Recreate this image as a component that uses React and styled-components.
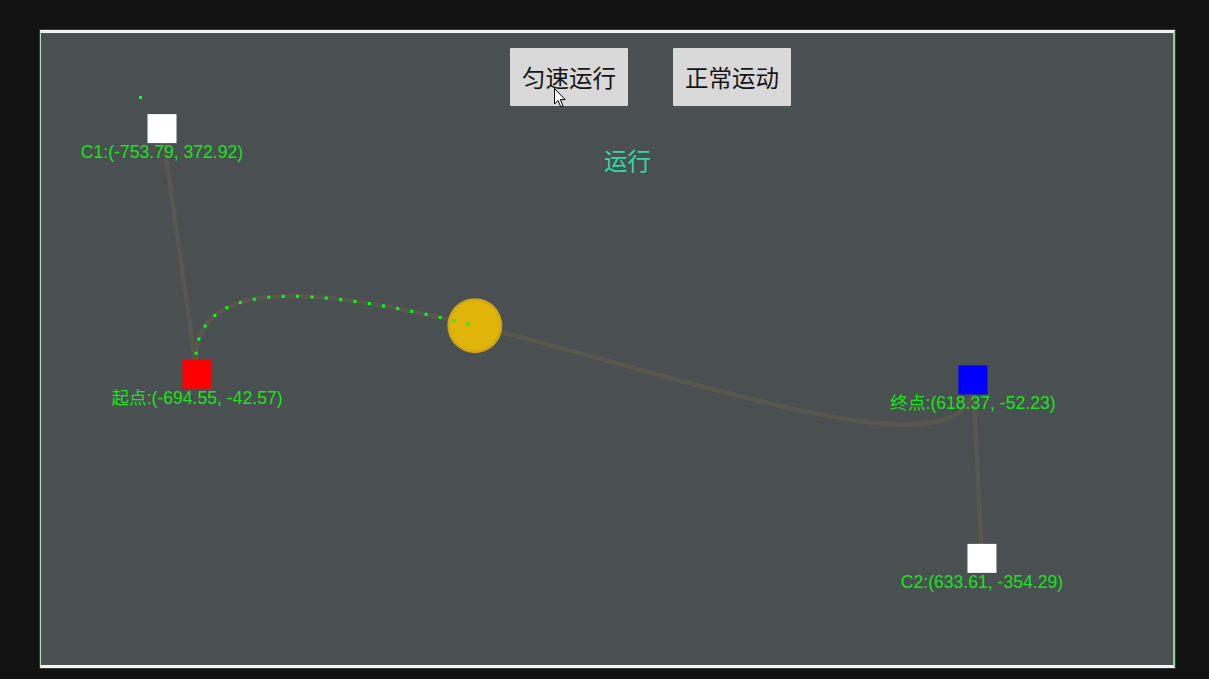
import React from "react";
import styled, { createGlobalStyle } from "styled-components";

const Global = createGlobalStyle`
  html, body { margin: 0; padding: 0; background: #121212; }
  body { width: 1209px; height: 679px; overflow: hidden; font-family: "Liberation Sans", "Noto Sans CJK SC", sans-serif; }
`;

const ORIGIN_X = 41;
const ORIGIN_Y = 33;
const SCALE = 0.591;
const CX = 607.5;
const CY = 349;
const toScreen = ([wx, wy]) => [CX + wx * SCALE, CY - wy * SCALE];

const Stage = styled.div`
  position: relative;
  margin: 30px 0 0 40px;
  width: 1132px;
  height: 632px;
  background: #4a4f52;
  border-top: 3px solid #f4f4f4;
  border-bottom: 3px solid #f4f4f4;
  border-left: 1px solid #b8e0b8;
  border-right: 2px solid #92d092;
  box-shadow: 0 0 0 1px #383838;
  display: flex;
  flex-direction: column;
`;

const Canvas = styled.svg`
  position: absolute;
  left: 0;
  top: 0;
  width: 1132px;
  height: 632px;
`;

const Toolbar = styled.div`
  position: relative;
  display: flex;
  gap: 45px;
  margin-top: 15px;
  padding-left: 469px;
`;

const Button = styled.button`
  width: 118px;
  height: 58px;
  border: none;
  border-radius: 1px;
  background: #d9d9d9;
  color: #161616;
  font-family: "Noto Sans CJK SC", sans-serif;
  font-size: 23.5px;
  padding: 0;
  display: flex;
  align-items: center;
  justify-content: center;
`;

const Status = styled.div`
  position: relative;
  margin-top: 41px;
  padding-left: 563px;
  color: #2ed9a2;
  font-family: "Noto Sans CJK SC", sans-serif;
  font-size: 23.5px;
  line-height: 26px;
`;

const Label = styled.div`
  position: absolute;
  transform: translateX(-50%);
  white-space: nowrap;
  color: #16e516;
  font-family: "Liberation Sans", "Noto Sans CJK SC", sans-serif;
  font-size: 17.6px;
  line-height: 20px;
`;

const Cursor = styled.svg`
  position: absolute;
  width: 13px;
  height: 20px;
`;

const points = {
  c1: { w: [-753.79, 372.92], fill: "#ffffff", label: "C1:(-753.79, 372.92)" },
  start: { w: [-694.55, -42.57], fill: "#ff0000", label: "起点:(-694.55, -42.57)" },
  end: { w: [618.37, -52.23], fill: "#0000ff", label: "终点:(618.37, -52.23)" },
  c2: { w: [633.61, -354.29], fill: "#ffffff", label: "C2:(633.61, -354.29)" },
};

const P0 = toScreen(points.start.w);
const P1 = toScreen(points.c1.w);
const P2 = toScreen(points.c2.w);
const P3 = toScreen(points.end.w);

const bez = (t) => {
  const a = (1 - t) ** 3, b = 3 * (1 - t) ** 2 * t, c = 3 * (1 - t) * t * t, d = t ** 3;
  return [a * P0[0] + b * P1[0] + c * P2[0] + d * P3[0], a * P0[1] + b * P1[1] + c * P2[1] + d * P3[1]];
};

const BALL_T = 0.415;
const ball = bez(BALL_T);

const trail = (() => {
  const samples = [];
  let len = 0;
  let prev = bez(0);
  const N = 2000;
  for (let i = 0; i <= N; i++) {
    const t = (i / N) * BALL_T;
    const p = bez(t);
    len += Math.hypot(p[0] - prev[0], p[1] - prev[1]);
    samples.push({ p, len });
    prev = p;
  }
  const first = 21;
  const last = len - 7;
  const count = 22;
  const step = (last - first) / (count - 1);
  const dots = [];
  let j = 0;
  for (let k = 0; k < count; k++) {
    const target = first + k * step;
    while (j < samples.length - 1 && samples[j].len < target) j++;
    dots.push(samples[j].p);
  }
  return dots;
})();

const SQ = 29;

export default function App() {
  const curve = `M${P0[0]} ${P0[1]} C${P1[0]} ${P1[1]} ${P2[0]} ${P2[1]} ${P3[0]} ${P3[1]}`;
  return (
    <>
      <Global />
      <Stage>
        <Canvas viewBox={`${ORIGIN_X} ${ORIGIN_Y} 1132 632`}>
          <defs>
            <radialGradient id="ballG" cx="50%" cy="50%" r="50%">
              <stop offset="86%" stopColor="#e0b409" />
              <stop offset="100%" stopColor="#c6a01a" />
            </radialGradient>
          </defs>
          <g stroke="#58574e" strokeWidth="4.5" fill="none" strokeLinecap="round">
            <line x1={P1[0]} y1={P1[1]} x2={P0[0]} y2={P0[1]} />
            <line x1={P3[0]} y1={P3[1]} x2={P2[0]} y2={P2[1]} />
            <path d={curve} />
          </g>
          <circle cx={ball[0]} cy={ball[1]} r="27.5" fill="url(#ballG)" />
          <rect x={139} y={96} width={3} height={3} fill="#00ff1a" />
          {trail.map(([x, y], i) => (
            <rect key={i} x={x - 1.5} y={y - 1.5} width={3} height={3} fill="#00ff1a" />
          ))}
          {Object.entries(points).map(([k, pt]) => {
            const [x, y] = toScreen(pt.w);
            return <rect key={k} x={x - SQ / 2} y={y - SQ / 2} width={SQ} height={SQ} fill={pt.fill} />;
          })}
        </Canvas>
        <Toolbar>
          <Button>匀速运行</Button>
          <Button>正常运动</Button>
        </Toolbar>
        <Status>运行</Status>
        {Object.entries(points).map(([k, pt]) => {
          const [x, y] = toScreen(pt.w);
          return (
            <Label key={k} style={{ left: x - ORIGIN_X, top: y + SQ / 2 - 1 - ORIGIN_Y }}>
              {pt.label}
            </Label>
          );
        })}
        <Cursor viewBox="0 0 13 20" style={{ left: 554 - ORIGIN_X, top: 88 - ORIGIN_Y }}>
          <path d="M0.5 0.5 L0.5 16 L4 12.5 L6.8 18.8 L9 17.8 L6.3 11.6 L11.2 11.6 Z" fill="#ffffff" stroke="#000000" strokeWidth="1" strokeLinejoin="round" />
        </Cursor>
      </Stage>
    </>
  );
}
